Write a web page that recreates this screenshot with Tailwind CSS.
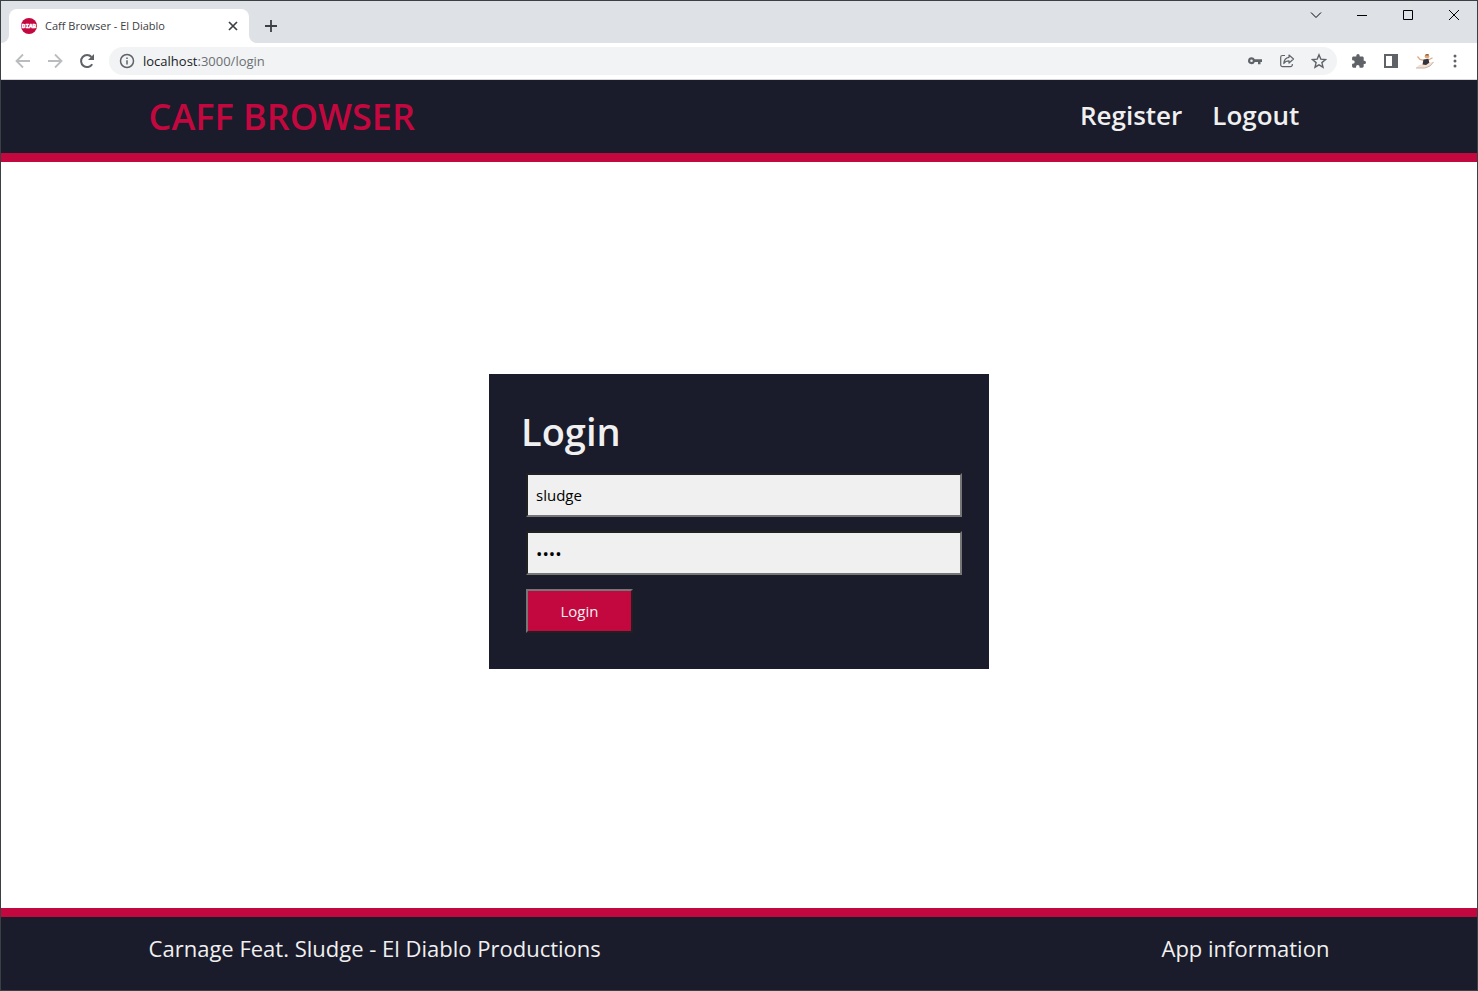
<!DOCTYPE html>
<html lang="en">
<head>
<meta charset="utf-8">
<title>Caff Browser - El Diablo</title>
<script src="https://cdn.jsdelivr.net/npm/@tailwindcss/browser@4"></script>
</head>
<body class="flex min-h-screen flex-col border border-[#3b4043] bg-white font-['Open_Sans','Noto_Sans',sans-serif] text-[#f0f0f0]">

<!-- Tab strip -->
<div class="flex h-[42px] shrink-0 items-end justify-between bg-[#dee1e6] text-[#3c4043]">
  <div class="flex items-end">
    <div class="flex h-2 w-2 bg-white"><div class="h-2 w-2 rounded-br-lg bg-[#dee1e6]"></div></div>
    <div class="flex h-[34px] w-60 items-center rounded-t-lg bg-white pr-2 pl-3">
      <svg class="mr-2 size-4 shrink-0" viewBox="0 0 16 16" aria-hidden="true">
        <circle cx="8" cy="8" r="8" fill="#c3073f"/>
        <text x="8" y="10" text-anchor="middle" class="fill-white font-['Liberation_Mono',monospace] text-[6px] font-bold" stroke="#fff" stroke-width="0.500">DIAB</text>
      </svg>
      <span class="flex-1 text-[11px]">Caff Browser - El Diablo</span>
      <button class="grid size-4 place-items-center" aria-label="Close tab">
        <svg class="size-4" viewBox="0 0 16 16" fill="none" stroke="#3c4043" stroke-width="1.700"><path d="M4 4l8 8M12 4l-8 8"/></svg>
      </button>
    </div>
    <div class="flex h-2 w-2 bg-white"><div class="h-2 w-2 rounded-bl-lg bg-[#dee1e6]"></div></div>
    <button class="ml-1 grid h-[34px] w-5 place-items-center" aria-label="New tab">
      <svg class="size-4" viewBox="0 0 16 16" fill="none" stroke="#3c4043" stroke-width="1.800"><path d="M8 2v12M2 8h12"/></svg>
    </button>
  </div>
  <div class="flex h-7 self-start text-black">
    <button class="grid w-[46px] place-items-center" aria-label="Search tabs"><svg class="size-3" viewBox="0 0 12 12" fill="none" stroke="currentColor"><path d="M1 3.500l5 5 5-5"/></svg></button>
    <button class="grid w-[46px] place-items-center" aria-label="Minimize"><svg class="size-3" viewBox="0 0 12 12" fill="none" stroke="currentColor"><path d="M1 6.500h10"/></svg></button>
    <button class="grid w-[46px] place-items-center" aria-label="Maximize"><svg class="size-3" viewBox="0 0 12 12" fill="none" stroke="currentColor"><path d="M1.500 1.500h9v9h-9z"/></svg></button>
    <button class="grid w-[46px] place-items-center" aria-label="Close"><svg class="size-3" viewBox="0 0 12 12" fill="none" stroke="currentColor"><path d="M1 1l10 10M11 1L1 11"/></svg></button>
  </div>
</div>

<!-- Toolbar -->
<div class="flex h-[37px] shrink-0 items-center border-b border-[#d5d7da] pr-[14px] pl-3 text-[#5f6368]">
  <div class="mr-3 flex gap-3">
    <button class="text-[#babcbe]" aria-label="Back"><svg class="size-5" viewBox="0 0 20 20" fill="none" stroke="currentColor" stroke-width="1.800"><path d="M17 10H4M10 3.500L3.500 10l6.500 6.500"/></svg></button>
    <button class="text-[#babcbe]" aria-label="Forward"><svg class="size-5" viewBox="0 0 20 20" fill="none" stroke="currentColor" stroke-width="1.800"><path d="M3 10h13M10 3.500l6.500 6.500-6.500 6.500"/></svg></button>
    <button aria-label="Reload"><svg class="size-5" viewBox="0 0 20 20"><path d="M15.200 13.200A6 6 0 1 1 14.500 6" fill="none" stroke="currentColor" stroke-width="2"/><path d="M17 3v6h-6z" fill="currentColor"/></svg></button>
  </div>
  <div class="flex h-7 flex-1 items-center rounded-full bg-[#f1f3f4] px-[10px]">
    <svg class="mr-2 size-4" viewBox="0 0 16 16" fill="none" stroke="currentColor" stroke-width="1.500"><circle cx="8" cy="8" r="6.500"/><path d="M8 7.200V11.500M8 4.500V6"/></svg>
    <a href="#" class="flex-1 pt-px text-[13px] text-[#6b6f73]"><span class="text-[#202124]">localhost</span>:3000/login</a>
    <div class="flex gap-4">
      <button aria-label="Saved passwords"><svg class="size-4" viewBox="0 0 16 16"><path d="M4.500 4.200a3.500 3.500 0 1 0 3.300 4.800H11v2.300h2.500V9H15V6.300H7.800A3.500 3.500 0 0 0 4.500 4.200zm0 2.200a1.300 1.300 0 1 1 0 2.600 1.300 1.300 0 0 1 0-2.600z" fill="currentColor" fill-rule="evenodd"/></svg></button>
      <button aria-label="Share"><svg class="size-4" viewBox="0 0 16 16" fill="none" stroke="currentColor" stroke-width="1.200" stroke-linejoin="round"><path d="M6 2.500H3.500a1.800 1.800 0 0 0-1.800 1.800v7.500a1.800 1.800 0 0 0 1.800 1.800h8a1.800 1.800 0 0 0 1.800-1.800V11"/><path d="M10 2l4.500 4L10 10V7.800c-2.500 0-4 .8-5.200 2.700C5 7 6.800 4.800 10 4.300z"/></svg></button>
      <button aria-label="Bookmark"><svg class="size-4" viewBox="0 0 16 16" fill="none" stroke="currentColor" stroke-width="1.400"><path d="M8 1.800l1.800 4.300 4.700.4-3.600 3.100 1.100 4.600L8 11.800l-4 2.400 1.100-4.600-3.600-3.100 4.700-.4z"/></svg></button>
    </div>
  </div>
  <div class="ml-[14px] flex items-center gap-4">
    <button aria-label="Extensions"><svg class="size-4" viewBox="0 0 16 16" fill="currentColor"><path d="M13.300 7.700h-.6V4.800c0-.8-.6-1.400-1.400-1.400H8.700v-.7a1.700 1.700 0 0 0-3.400 0v.7H2.500c-.8 0-1.400.6-1.400 1.400v2.400h.8a1.800 1.800 0 0 1 0 3.600h-.8v2.500c0 .8.600 1.400 1.400 1.400H5v-.8a1.800 1.800 0 0 1 3.600 0v.8h2.700c.8 0 1.400-.6 1.400-1.400v-2.200h.6a1.700 1.700 0 0 0 0-3.400z"/></svg></button>
    <button aria-label="Side panel"><svg class="size-4" viewBox="0 0 16 16"><path d="M1 1h14v14H1zM3 3v10h6V3z" fill="currentColor" fill-rule="evenodd"/></svg></button>
    <button aria-label="Profile"><svg class="h-4 w-5" viewBox="0 0 20 16"><path d="M1 15L4 12l6-1 9-2.500-3 4-5 2.500z" fill="#f3e2d3"/><path d="M1 15h9l5-2 3.500-4" fill="none" stroke="#b7a595" stroke-width="0.800"/><path d="M2.500 3.500L5 6.500l4 .8M13.500 7l4-2.300" fill="none" stroke="#e0a982" stroke-width="1.300"/><path d="M8.500 6.500l5-.8.800 4L11 12l-3.500-.5z" fill="#33343c"/><circle cx="12" cy="3.200" r="2.300" fill="#e0a77c"/><path d="M10 2.500q1-2.500 4-1l-.5 1z" fill="#8b592e"/></svg></button>
    <button aria-label="Menu" class="-ml-1"><svg class="size-4" viewBox="0 0 16 16" fill="currentColor"><circle cx="8" cy="3" r="1.500"/><circle cx="8" cy="8" r="1.500"/><circle cx="8" cy="13" r="1.500"/></svg></button>
  </div>
</div>

<header class="flex h-[82px] shrink-0 items-center justify-between border-b-[9px] border-[#c3073f] bg-[#1a1b2b] px-[10%] font-semibold">
  <a href="#" class="text-[36px] leading-none text-[#c3073f]">CAFF BROWSER</a>
  <nav class="flex gap-[30px] pr-[30px] pb-1 text-[26px] leading-none">
    <a href="#">Register</a>
    <a href="#">Logout</a>
  </nav>
</header>

<main class="flex flex-1 items-center justify-center pb-[27px]">
  <form class="w-[500px] bg-[#1a1b2b] px-8 pt-[30px] pb-9" onsubmit="return false">
    <h1 class="mb-[14px] text-[38px] leading-[55px] font-semibold">Login</h1>
    <div class="flex flex-col items-start gap-[14px] pl-[5px]">
      <input type="text" aria-label="Username" value="sludge" class="h-11 w-[436px] border-2 border-t-[#212121] border-r-[#767676] border-b-[#767676] border-l-[#212121] bg-[#f0f0f0] px-2 text-[15px] text-black">
      <input type="password" aria-label="Password" value="pass" class="h-11 w-[436px] border-2 border-t-[#212121] border-r-[#767676] border-b-[#767676] border-l-[#212121] bg-[#f0f0f0] px-2 text-[17px] text-black">
      <button type="submit" class="h-11 w-[107px] border-2 border-t-[#767676] border-r-[#212121] border-b-[#212121] border-l-[#767676] bg-[#c3073f] text-[15px]">Login</button>
    </div>
  </form>
</main>

<footer class="flex h-[82px] shrink-0 items-center justify-between border-t-[9px] border-[#c3073f] bg-[#1a1b2b] px-[10%] pb-[10px] text-[22px]">
  <p>Carnage Feat. Sludge - El Diablo Productions</p>
  <a href="#">App information</a>
</footer>
</body>
</html>
